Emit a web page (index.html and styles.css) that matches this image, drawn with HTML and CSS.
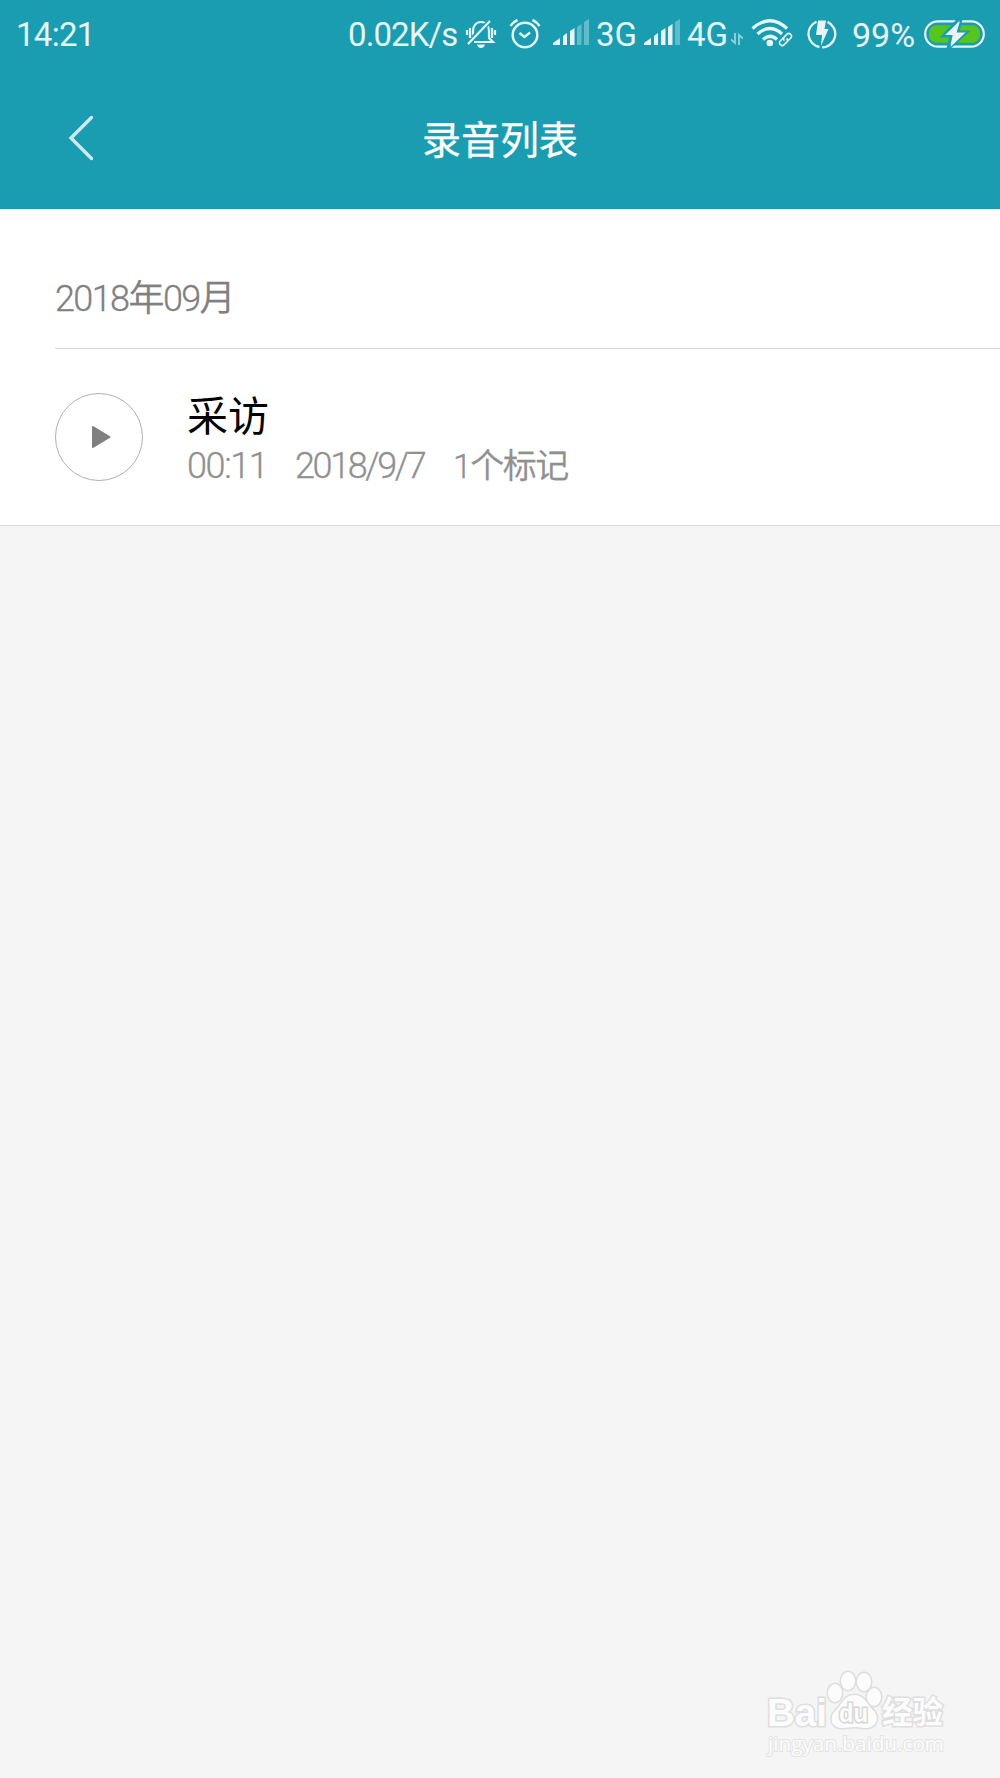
FILE: index.html
```html
<!DOCTYPE html>
<html lang="zh-CN">
<head>
  <meta charset="UTF-8">
  <meta name="viewport" content="width=device-width, initial-scale=1.0">
  <title>录音列表</title>
  <link rel="stylesheet" href="styles.css">
</head>
<body>

  <header class="header">
    <div class="status-bar">
      <span class="time">14:21</span>
      <div class="status-icons">
        <span class="speed">0.02K/s</span>
        <!-- mute -->
        <svg class="bell" width="32" height="32" viewBox="0 0 32 32">
          <path d="M8 23V13C8 8 11 4 16 4S24 8 24 13V20L28 24H9" fill="none" stroke="currentColor" stroke-width="2.200"/>
          <path d="M4 24L24 4" stroke="#1a9db1" stroke-width="5"/>
          <path d="M3 26L25 3M2 12V17M5 10V20M27 10V20M30 12V17" fill="none" stroke="currentColor" stroke-width="2.200"/>
          <path d="M12 26.500H20Q19 30 16 30T12 26.500Z" fill="currentColor"/>
        </svg>
        <!-- alarm -->
        <svg class="alarm" width="32" height="32" viewBox="0 0 32 32">
          <circle cx="16" cy="17" r="12.300" fill="none" stroke="currentColor" stroke-width="2.500"/>
          <path d="M10.500 15L15.500 19L21 14.500M1.500 8Q4 4 8.500 2M23.500 2Q28 4 30.500 8" fill="none" stroke="currentColor" stroke-width="2.500"/>
        </svg>
        <svg class="signal" width="36" height="26" viewBox="0 0 36 26">
          <path d="M0 26V24L7 19V26ZM10 26V17L14 14V26ZM17 26V12L21.500 9V26Z" fill="currentColor"/>
          <path class="dim" d="M24 26V8L28.500 5V26ZM31 26V3L36 0V26Z" fill="currentColor"/>
        </svg>
        <span class="net net-3g">3G</span>
        <svg class="signal signal-2" width="36" height="26" viewBox="0 0 36 26">
          <path d="M0 26V24L7 19V26ZM10 26V17L14 14V26ZM17 26V12L21.500 9V26ZM24 26V8L28.500 5V26Z" fill="currentColor"/>
          <path class="dim" d="M31 26V3L36 0V26Z" fill="currentColor"/>
        </svg>
        <span class="net net-4g">4G</span>
        <svg class="arrows" width="12" height="12" viewBox="0 0 12 12">
          <path d="M4 0V10L0 6.500M8 12V2L12 5.500" fill="none" stroke="currentColor" stroke-width="1.800"/>
        </svg>
        <!-- wifi -->
        <svg class="wifi" width="42" height="28" viewBox="0 0 42 28">
          <g fill="none" stroke="currentColor">
            <path d="M1.500 9.500Q19 -6 36 9.500" stroke-width="3.200"/>
            <path d="M6.500 15Q19 4 31 15" stroke-width="3.200"/>
            <path d="M12 20.500Q19 14 26 20.500" stroke-width="3.200"/>
            <g transform="rotate(-45 34.500 20.500)" stroke-width="1.600">
              <path d="M35 17.800H30A2.700 2.700 0 0 0 30 23.200H33.500A2.700 2.700 0 0 0 36 20.500"/>
              <path d="M34 23.200H39A2.700 2.700 0 0 0 39 17.800H35.500A2.700 2.700 0 0 0 33 20.500"/>
            </g>
          </g>
          <circle cx="18.800" cy="24" r="3.300" fill="currentColor"/>
        </svg>
        <!-- fast charge -->
        <svg class="charge" width="30" height="30" viewBox="0 0 30 30">
          <path d="M9.500 2.700A13.300 13.300 0 0 0 12.500 28M15 28.300A13.300 13.300 0 0 0 20.500 2.900" fill="none" stroke="currentColor" stroke-width="2.300"/>
          <path d="M11 1.500H19L17.500 10H21.500L14 27L15 16H9Z" fill="currentColor"/>
        </svg>
        <span class="percent">99%</span>
        <svg class="battery" width="61" height="28" viewBox="0 0 61 28">
          <rect x="1.200" y="1.300" width="58.600" height="25.400" rx="12.700" fill="none" stroke="currentColor" stroke-width="2.200"/>
          <rect x="5" y="5.200" width="51" height="17.600" rx="7.500" fill="#58c51c"/>
          <path d="M35 -1L19 16H27L24 29L43 12H34L37 -1Z" fill="currentColor" stroke="#1a9db1" stroke-width="3"/>
          <path d="M36 1L21 15H29.500L26.500 27L41.500 12.500H32.500Z" fill="currentColor"/>
        </svg>
      </div>
    </div>

    <div class="title-bar">
      <svg class="back" width="28" height="46" viewBox="0 0 28 46">
        <path d="M24.500 2.500L4 23L24.500 43.500" fill="none" stroke="currentColor" stroke-width="3.400" stroke-linecap="round"/>
      </svg>
      <h1>录音列表</h1>
    </div>
  </header>

  <main class="list">
    <h2 class="month">2018年09月</h2>
    <div class="record">
      <button class="play" aria-label="播放">
        <svg width="20" height="24" viewBox="0 0 20 24">
          <path d="M2 2V22L18.500 12Z" fill="#808080" stroke="#808080" stroke-width="2" stroke-linejoin="round"/>
        </svg>
      </button>
      <div class="info">
        <div class="name">采访</div>
        <div class="meta">
          <span class="length">00:11</span>
          <span class="date">2018/9/7</span>
          <span class="marks">1个标记</span>
        </div>
      </div>
    </div>
  </main>

  <svg class="watermark" width="190" height="96" viewBox="0 0 190 96">
    <g class="logo">
      <text x="7" y="62" font-size="39" textLength="60" lengthAdjust="spacingAndGlyphs">Bai</text>
      <ellipse cx="75" cy="29" rx="7" ry="9"/>
      <ellipse cx="88" cy="17" rx="7" ry="9"/>
      <ellipse cx="104" cy="18" rx="7" ry="9"/>
      <ellipse cx="114" cy="33" rx="7" ry="9"/>
      <path d="M94 31C105 31 107 41 114 47C120 54 116 64 106 64C100 64 98 63 94 63C89 63 87 64 82 64C71 64 69 53 75 47C82 41 84 31 94 31Z"/>
      <text class="du" x="79" y="58" font-size="25" textLength="29" lengthAdjust="spacingAndGlyphs">du</text>
      <text class="jingyan" x="122" y="59" font-size="31" textLength="61" lengthAdjust="spacingAndGlyphs">经验</text>
    </g>
    <text class="site" x="8" y="87" font-size="20" textLength="176" lengthAdjust="spacingAndGlyphs">jingyan.baidu.com</text>
  </svg>

</body>
</html>
```
FILE: styles.css
```css
* {
  box-sizing: border-box;
}

body {
  position: relative;
  min-height: 1778px;
  margin: 0;
  background-color: #f5f5f5;
  font-family: Roboto, "Noto Sans CJK SC", sans-serif;
}

svg {
  display: block;
  flex: none;
}

.header {
  height: 209px;
  background-color: #1a9db1;
  border-bottom: 1px solid #159aae;
  color: #fff;
}

.status-bar {
  display: flex;
  justify-content: space-between;
  height: 70px;
  padding: 0 15px 0 16px;
  color: #e6f5f7;
  font-size: 33px;
  line-height: 70px;
  white-space: nowrap;
}

.time {
  letter-spacing: -0.7px;
}

.status-icons {
  display: flex;
  align-items: flex-start;
}

.speed {
  width: 117px;
  letter-spacing: -0.9px;
}

.bell {
  margin-top: 18px;
}

.alarm {
  margin: 18px 0 0 12px;
}

.signal {
  margin: 19px 0 0 12px;
}

.net {
  width: 47px;
  padding-left: 7px;
}

.signal-2 {
  margin-left: 8px;
}

.arrows {
  margin: 33px 0 0 4px;
  opacity: 0.6;
}

.dim {
  opacity: 0.35;
}

.wifi {
  margin: 19px 0 0 8px;
}

.charge {
  margin: 19px 0 0 14px;
}

.percent {
  width: 72px;
  margin-left: 14px;
  padding-left: 1px;
  font-size: 34px;
}

.battery {
  margin: 20px 0 0 1px;
}

.title-bar {
  display: grid;
  grid-template-columns: 100px 1fr 100px;
  align-items: center;
  height: 136px;
}

.back {
  margin: 0 0 0 67px;
  color: #cfeaee;
}

h1 {
  margin: 0;
  padding-bottom: 2px;
  font-size: 39px;
  font-weight: 400;
  text-align: center;
  -webkit-text-stroke: 0.3px;
}

.list {
  height: 317px;
  background-color: #fff;
  border-bottom: 1px solid #dcdcdc;
}

.month {
  height: 140px;
  margin: 0 0 0 55px;
  padding-top: 65px;
  border-bottom: 1px solid #dcdcdc;
  color: #808080;
  font-size: 36px;
  font-weight: 350;
  line-height: 50px;
  letter-spacing: -1.6px;
  -webkit-text-stroke: 0.3px;
}

.record {
  display: flex;
  padding: 44px 0 0 55px;
}

.play {
  display: flex;
  align-items: center;
  justify-content: center;
  width: 88px;
  height: 88px;
  padding: 0 0 0 4px;
  background: none;
  border: 1px solid #b0b0b0;
  border-radius: 50%;
}

.info {
  padding-left: 44px;
}

.name {
  padding-top: 2px;
  font-size: 41px;
  line-height: 44px;
}

.meta {
  display: flex;
  align-items: baseline;
  color: #909090;
  font-size: 36px;
  font-weight: 350;
  line-height: 55px;
  white-space: nowrap;
  -webkit-text-stroke: 0.3px;
}

.length {
  width: 108px;
  letter-spacing: -1.4px;
}

.date {
  width: 158px;
  letter-spacing: -2.4px;
}

.marks {
  font-size: 34px;
  letter-spacing: -1.5px;
}

.watermark {
  position: absolute;
  right: 50px;
  bottom: 18px;
  fill: #fcfcfc;
  stroke: #dedede;
  stroke-width: 3px;
  paint-order: stroke;
  font-family: "Liberation Sans", "Noto Sans CJK SC", sans-serif;
}

.logo {
  font-weight: 700;
}

.du {
  stroke: #d6d6d6;
  stroke-width: 3px;
}

.jingyan {
  font-family: "Noto Sans CJK SC", sans-serif;
}

.site {
  font-family: "Open Sans", sans-serif;
  stroke: #e4e4e4;
  stroke-width: 2px;
}
```
